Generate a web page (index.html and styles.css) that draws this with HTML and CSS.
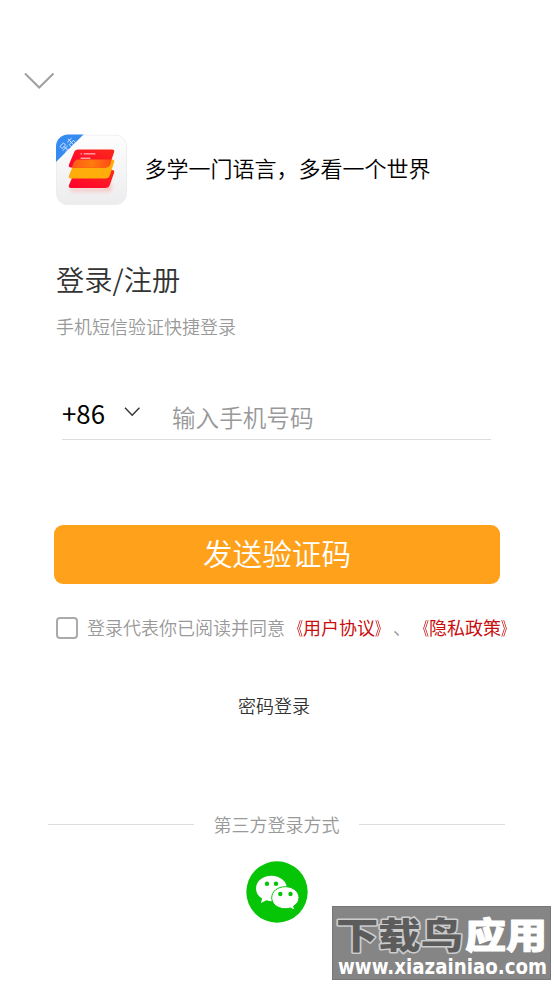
FILE: index.html
```html
<!DOCTYPE html>
<html lang="zh-CN">
<head>
<meta charset="utf-8">
<title>登录/注册</title>
<link rel="stylesheet" href="styles.css">
</head>
<body>
<main class="screen">
  <svg class="collapse" width="32" height="20" viewBox="0 0 32 20"><path d="M2 2.5 16.2 16.5 30.5 2.5" fill="none" stroke="#a0a0a0" stroke-width="2"/></svg>

  <header class="brand">
    <svg class="logo" width="72" height="72" viewBox="0 0 72 72">
      <defs>
        <linearGradient id="tile" x1="0" y1="0" x2="0" y2="1"><stop offset="0" stop-color="#fefefe"/><stop offset="1" stop-color="#ececee"/></linearGradient>
        <linearGradient id="red" x1="0" y1="1" x2="1" y2="0"><stop offset="0" stop-color="#ff002e"/><stop offset=".55" stop-color="#ff1724"/><stop offset="1" stop-color="#f82a18"/></linearGradient>
        <linearGradient id="overlap" x1="0" y1="0" x2="1" y2="0"><stop offset="0" stop-color="#ff5a17"/><stop offset=".5" stop-color="#ff7b0c"/><stop offset="1" stop-color="#ff4a16"/></linearGradient>
        <clipPath id="round"><rect x="0" y=".5" width="71" height="70.5" rx="12"/></clipPath>
        <filter id="soft" x="-30%" y="-80%" width="160%" height="260%"><feGaussianBlur stdDeviation="2.2"/></filter>
      </defs>
      <g clip-path="url(#round)">
        <rect width="72" height="72" fill="url(#tile)"/>
        <rect x=".5" y="1" width="70" height="69.5" rx="11.5" fill="none" stroke="#ededee"/>
        <path d="M0 0H28L0 28Z" fill="#358bf2"/>
        <g transform="translate(3.2 13) rotate(-43)" fill="none" stroke="#d5e8ff" stroke-width=".9">
          <path d="M1 0h5v3H1zM0 5h7M4 3v5M1 8h5M9 2h6M12 0v9M9 5h6M9 8h6M9 5v3M15 5v3"/>
        </g>
      </g>
      <path d="M15 54H50L55 47V57H15Z" fill="#ff7867" opacity=".45" filter="url(#soft)"/>
      <path d="M22 36H56Q59 36 58 39L54 50.5Q53 54 49 54H15Q12 54 13 51L18 39Q19 36 22 36Z" fill="url(#red)"/>
      <path d="M22 25.500H56Q59 25.500 58 28.500L54 41Q53 44.500 49 44.500H15Q12 44.500 13 41.500L18 29Q19 25.500 22 25.500Z" fill="#ffad0b"/>
      <path d="M22 15.500H56Q59 15.500 58 18.500L54 30Q53 33.500 49 33.500H15Q12 33.500 13 30.500L18 18.500Q19 15.500 22 15.500Z" fill="url(#red)"/>
      <path d="M22 25.500H55.500L54 30Q53 33.500 49 33.500H16Q18 25.500 22 25.500Z" fill="url(#overlap)"/>
      <path d="M25 19.900h.6M28 19.900h11M25 24.200h9" stroke="#fff" stroke-width="1" stroke-linecap="round" opacity=".85"/>
    </svg>
    <p class="slogan">多学一门语言，多看一个世界</p>
  </header>

  <h1 class="title">登录/注册</h1>
  <p class="subtitle">手机短信验证快捷登录</p>

  <div class="phone">
    <span class="code">+86</span>
    <svg class="caret" width="18" height="12" viewBox="0 0 18 12"><path d="M2 1.700 9.200 9.300 16.400 1.700" fill="none" stroke="#333" stroke-width="1.4"/></svg>
    <span class="placeholder">输入手机号码</span>
  </div>

  <div class="submit">发送验证码</div>

  <div class="agree">
    <span class="box"></span>
    <p class="terms">登录代表你已阅读并同意<span class="link"><span class="open">《</span>用户协议<span class="close">》</span></span>、<span class="link"><span class="open">《</span>隐私政策<span class="close">》</span></span></p>
  </div>

  <p class="password">密码登录</p>

  <div class="divider"><span class="rule"></span><span>第三方登录方式</span><span class="rule"></span></div>

  <svg class="wechat" width="62" height="62" viewBox="0 0 62 62">
    <circle cx="31" cy="31" r="30.7" fill="#06c406"/>
    <path d="M25.300 14.800C16.500 14.800 10 20.500 10 27.500C10 31.700 12.200 35.200 16 37.500L15 42L20.500 39.300Q23 40.300 27 40.200C36 39.800 41 34.500 41 27.500C41 20.500 34 14.800 25.300 14.800Z" fill="#fff"/>
    <path d="M39.300 25.700C31.500 25.700 25.700 30.500 25.700 36.800C25.700 43 31.500 47.700 39.300 47.700Q42 47.700 44.200 47L48.800 49.200L47.600 45.200C51 43.100 53 40.300 53 36.800C53 30.500 47 25.700 39.300 25.700Z" fill="#fff" stroke="#06c406" stroke-width="1"/>
    <g fill="#06c406"><circle cx="21" cy="22.800" r="2.200"/><circle cx="30" cy="22.800" r="2.200"/><circle cx="34.300" cy="33" r="2.200"/><circle cx="44.500" cy="33" r="2.200"/></g>
  </svg>
</main>

<aside class="watermark">
  <svg width="217" height="72" viewBox="0 0 217 72">
    <g class="mark">
      <text class="dark" x="3" y="42" textLength="127" lengthAdjust="spacingAndGlyphs">下载鸟</text>
      <text class="light" x="132" y="42" textLength="82" lengthAdjust="spacingAndGlyphs">应用</text>
    </g>
    <text class="site" x="5" y="66.500" textLength="209" lengthAdjust="spacingAndGlyphs">www.xiazainiao.com</text>
  </svg>
</aside>
</body>
</html>
```

FILE: styles.css
```css
* { box-sizing: border-box; }
body {
  margin: 0;
  background: #fff;
  color: #333;
  font-family: "Noto Sans CJK SC", sans-serif;
  font-size: 18px;
  font-weight: 350;
  line-height: 26px;
  text-spacing-trim: space-all;
}
h1, p { margin: 0; font-weight: inherit; white-space: nowrap; }
svg { display: block; }
.screen {
  height: 984px;
  padding: 71px 54px 0 56px;
  display: flex;
  flex-direction: column;
  overflow: hidden;
}
.screen > * { flex-shrink: 0; }
.collapse { margin-left: -33px; }
.brand {
  margin-top: 43px;
  display: flex;
  align-items: center;
  gap: 16.5px;
}
.slogan { color: #000; font-size: 22px; line-height: 32px; margin-top: -6px; }
.title { margin-top: 53px; font-size: 28.3px; line-height: 40px; }
.subtitle { margin-top: 14px; color: #999; }
.phone {
  margin: 56px 9px 0 6px;
  height: 45px;
  border-bottom: 1px solid #ddd;
  display: flex;
}
.code { width: 61px; color: #000; font-size: 25.8px; font-weight: 400; line-height: 36px; }
.caret { margin-top: 11px; }
.placeholder { margin-left: 31px; color: #999; font-size: 23.6px; line-height: 44px; }
.submit {
  margin: 85px 0 0 -2px;
  height: 59px;
  border-radius: 9px;
  background: #ffa11b;
  color: #fff;
  font-size: 29.6px;
  line-height: 56px;
  text-align: center;
}
.agree { margin-top: 30px; display: flex; align-items: center; gap: 9px; }
.box { width: 22px; height: 22px; border: 2px solid #aaa; border-radius: 4px; flex: none; margin-top: 2px; }
.terms { color: #999; }
.link { color: #c80f0f; font-weight: 400; }
.open, .close { display: inline-block; width: 18px; transform: scaleX(.68); }
.open { transform-origin: right; }
.close { transform-origin: left; }
.password { margin: 52px 0 0 182px; }
.divider {
  margin: 93px -5px 0 -8px;
  display: flex;
  align-items: center;
  justify-content: space-between;
  color: #999;
}
.rule { width: 146px; height: 1px; background: #ddd; margin-top: 1px; }
.wechat { margin: 24px 0 0 190px; }
.watermark {
  position: absolute;
  left: 332px;
  top: 906px;
  width: 219px;
  height: 74px;
  background: #858585;
  border: 1px solid #777;
  overflow: hidden;
}
.mark { font-size: 36px; font-weight: 900; }
.mark text { paint-order: stroke; stroke-linejoin: round; }
.dark { fill: #5c5c5c; stroke: #ccc; stroke-width: 3px; }
.light { fill: #fff; stroke: #fff; stroke-width: 1px; }
.site {
  font-family: "DejaVu Sans", sans-serif;
  font-size: 21px;
  font-weight: 700;
  fill: #fff;
}
```
